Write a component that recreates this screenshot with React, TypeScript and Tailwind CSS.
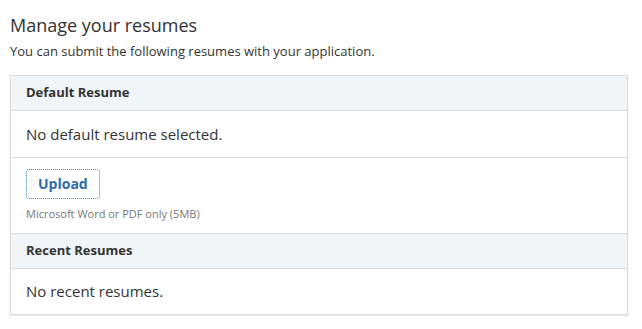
export default function App() {
  return (
    <div className="w-[642px] h-[329px] bg-white text-[#333] px-[10px] pt-[12px]" style={{ fontFamily: '"Open Sans", "Noto Sans", sans-serif' }}>
      <h1 className="text-[18px] leading-[26px] font-normal">Manage your resumes</h1>
      <p className="text-[13px] leading-[18px] mt-[4px]">You can submit the following resumes with your application.</p>

      <div className="mt-[15px] w-[618px] border border-[#dcdcdc] shadow-[0_1px_1px_rgba(0,0,0,0.08)]">
        {/* Default */}
        <div className="h-[35px] bg-[#f1f5f8] border-b border-[#dcdcdc] px-[15px] flex items-center">
          <span className="text-[13px] font-bold">Default Resume</span>
        </div>
        <div className="h-[47px] border-b border-[#dcdcdc] px-[15px] flex items-center">
          <span className="text-[15px]">No default resume selected.</span>
        </div>
        <div className="h-[76px] px-[15px] pt-[11px] border-b border-[#dcdcdc]">
          <button className="h-[30px] px-[11px] border border-dotted border-[#3d7fc1] rounded-[3px] text-[#2f6aab] text-[14px] font-bold leading-none">
            Upload
          </button>
          <p className="text-[11px] text-[#777] mt-[7px] leading-[16px]">Microsoft Word or PDF only (5MB)</p>
        </div>
        {/* Recent */}
        <div className="h-[35px] bg-[#f1f5f8] border-b border-[#dcdcdc] px-[15px] flex items-center">
          <span className="text-[13px] font-bold">Recent Resumes</span>
        </div>
        <div className="h-[45px] px-[15px] flex items-center">
          <span className="text-[15px]">No recent resumes.</span>
        </div>
      </div>
    </div>
  );
}
